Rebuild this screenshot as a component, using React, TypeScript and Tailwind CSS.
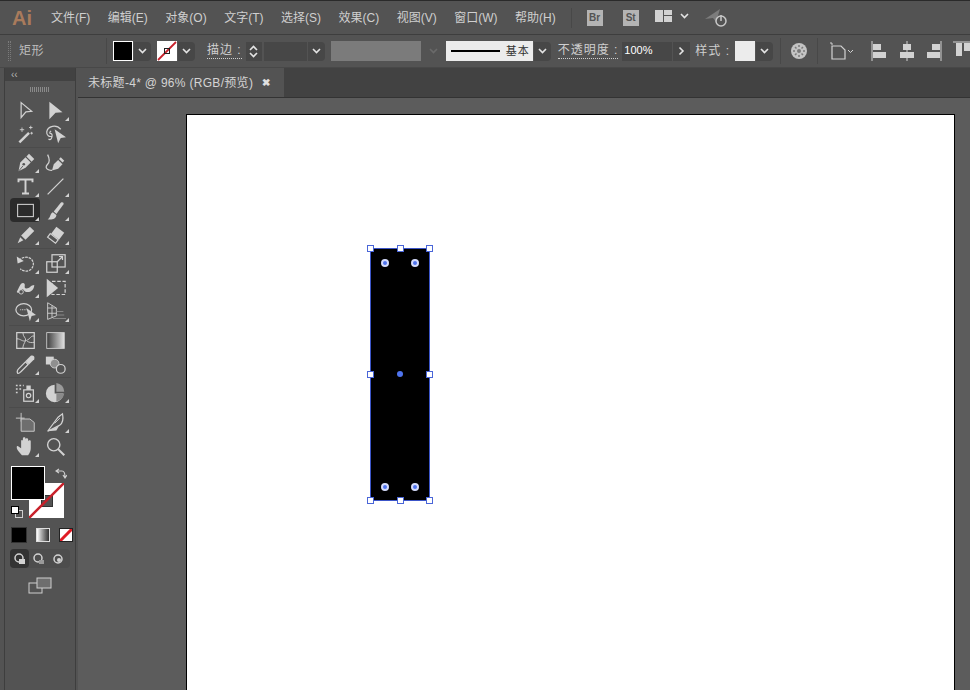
import type { ReactNode } from 'react';

const Chevron = ({ dim = false }: { dim?: boolean }) => (
  <svg width="9" height="6" viewBox="0 0 9 6" fill="none" stroke={dim ? '#6a6a6a' : '#e4e4e4'} strokeWidth="1.6">
    <path d="M1 1l3.5 3.5L8 1" />
  </svg>
);

const DropBtn = ({ w = 'w-[17px]' }: { w?: string }) => (
  <div className={`${w} h-[19px] bg-[#474747] rounded-r-sm flex items-center justify-center`}>
    <Chevron />
  </div>
);

const Sep = () => <div className="w-px h-[26px] bg-[#484848]" />;

const Label = ({ children, ml, dotted = true }: { children: ReactNode; ml: string; dotted?: boolean }) => (
  <span className={`${ml} text-[12px] leading-[15px] tracking-[1px] text-[#cfcfcf] whitespace-nowrap ${dotted ? 'border-b border-dotted border-[#cfcfcf]' : ''}`}>
    {children}
  </span>
);

const stroke = { fill: 'none', stroke: '#d2d2d2', strokeWidth: 1.4 };
const solid = { fill: '#d2d2d2', stroke: 'none' };

const toolIcons: Record<string, ReactNode> = {
  select: <path d="M7 3l12 10-6.500.5L7 20z" {...stroke} />,
  direct: <path d="M5 2l15 12-8 .5L5 22z" {...solid} />,
  wand: <g><path d="M4 20L15 9l2 2L6 22z" {...solid} /><path d="M8 4v5M5.500 6.500h5M18 2v4M16 4h4M19 9v3M17.500 10.500h3" {...stroke} strokeWidth={1} /></g>,
  lasso: <g><path d="M18 6C13 0 3 2 2 9c-.5 4 3 6 6 5M7 8c-2 1-2 3 0 3 2 1 1 4 0 6-1 1-2 1-3 0" {...stroke} /><path d="M11 6l13 9-6 1-3 6z" {...solid} /></g>,
  pen: <g><path d="M4 22l2-10 6-6 6 6-6 6z" {...solid} /><path d="M13 5l3-3 6 6-3 3z" {...solid} /><circle cx="10" cy="14" r="1.500" fill="#535353" /><path d="M4 22l5-6" stroke="#535353" strokeWidth="1" /></g>,
  curvature: <g><path d="M8 21l2-7 5-5 5 5-5 5z" {...solid} /><path d="M16 8l2-2 4 4-2 2z" {...solid} /><path d="M8 21c-7 0-8-4-5-7s2-7 0-11" {...stroke} /></g>,
  type: <path d="M4 7V4h16v3M12 4v16M8 20h8" {...stroke} strokeWidth={2.200} />,
  line: <path d="M3 21L21 3" {...stroke} />,
  rect: <rect x="3" y="5" width="18" height="14" {...stroke} strokeWidth={1.200} />,
  brush: <g><path d="M10 13l8-10c2-1 4 0 3 2l-8 11z" {...solid} /><path d="M3 22c3-1 3-7 6-8l4 3c0 4-5 6-10 5z" {...solid} /></g>,
  pencil: <g><path d="M7 13L17 3l5 5-10 10z" {...solid} /><path d="M6 15l3.500 3.500L3 22z" {...solid} /></g>,
  eraser: <g><path d="M13 3l9 7-6 8-9-7z" {...solid} /><path d="M6 11l9 7-3 4-9-7z" {...stroke} /></g>,
  rotate: <g><path d="M5 9c3-6 15-6 16 3 0 9-10 11-15 6" {...stroke} strokeDasharray="3 1" /><path d="M2 4l1 8 7-3z" {...solid} /></g>,
  scale: <g><rect x="8" y="2" width="15" height="14" {...stroke} /><rect x="2" y="10" width="12" height="12" {...stroke} /><path d="M14 10l6-6M16 4h4v4" {...stroke} /></g>,
  warp: <g><path d="M2 17c3-5 4-11 8-10 3 1-1 6 3 6s5-4 9-4c0 6-5 9-9 8s-3-5-6-2-3 4-5 2z" {...solid} /><circle cx="7" cy="17" r="2.500" fill="#535353" stroke="#d2d2d2" /></g>,
  free: <g><rect x="8" y="5" width="15" height="15" {...stroke} strokeDasharray="4 2" /><path d="M2 2l13 10.500L2 23z" {...solid} /></g>,
  shape: <g><ellipse cx="10" cy="10" rx="9" ry="7" {...stroke} /><path d="M6 10h8" {...stroke} strokeDasharray="1 1" /><path d="M13 8l11 8-5 1-2 6z" {...solid} /></g>,
  perspective: <g><path d="M3 2l10 6v9L3 21zM3 8h10M3 14h10M8 5v14" {...stroke} strokeWidth={1} /><path d="M13 12h8M13 16h9M9 20h15" {...stroke} strokeWidth={1} stroke="#8f8f8f" /></g>,
  mesh: <g><rect x="2" y="3" width="20" height="18" {...stroke} /><path d="M2 10c5 0 6 4 11 2s5-6 9-5M9 3c0 5 4 6 3 9s-3 5-3 9M14 13c2 1 5 2 8 1" {...stroke} strokeWidth={1} /></g>,
  gradient: <g><defs><linearGradient id="toolGrad"><stop offset="0" stopColor="#3c3c3c" /><stop offset="1" stopColor="#e0e0e0" /></linearGradient></defs><rect x="2" y="3" width="20" height="18" fill="url(#toolGrad)" stroke="#d2d2d2" /></g>,
  eyedropper: <g><path d="M3 22c-1-2 0-4 1-5l8-8 3 3-8 8c-1 1-3 3-4 2z" {...stroke} /><path d="M12 8l6-6c3-1 5 1 4 4l-6 6z" {...solid} /></g>,
  blend: <g><rect x="1" y="3" width="9" height="9" {...solid} /><circle cx="11" cy="11" r="5" fill="#8f8f8f" stroke="#d2d2d2" /><circle cx="18" cy="17" r="5" fill="#535353" stroke="#d2d2d2" strokeWidth={1.400} /></g>,
  spray: <g><rect x="10" y="9" width="11" height="13" {...stroke} /><rect x="13" y="4" width="5" height="5" {...solid} /><circle cx="15.500" cy="15.500" r="2.500" {...stroke} /><path d="M1 4h2M5 4h2M9 4h1M1 8h2M5 8h2M1 12h2" {...stroke} strokeWidth={1.800} /></g>,
  graph: <g><path d="M11 3a10 10 0 1 0 10 10H11z" {...solid} /><path d="M13 1a10 10 0 0 1 9 10h-9z" fill="#9a9a9a" /><path d="M13 13h9a10 10 0 0 1-9 9z" fill="#8a8a8a" /></g>,
  artboard: <g><path d="M7 1v10M1 7h10" {...stroke} strokeWidth={1} /><path d="M7 8h10l5 4v10H7z" fill="#6e6e6e" stroke="#d2d2d2" /></g>,
  slice: <g><path d="M3 22L15 6l5-4c1 5 1 10-3 13z" {...stroke} /><path d="M3 22l13-6-3 5z" {...solid} /><path d="M11 13l6-6" {...stroke} strokeWidth={1} /></g>,
  hand: <path d="M8 22c-2-3-6-6-6-9s2-1 5 1V6c0-2 2-2 2 0V3c0-2 3-2 3 0v1c0-2 3-2 3 0v2c0-1 3-2 3 0v8c0 3-1 5-3 8z" {...solid} />,
  zoom: <g><circle cx="10" cy="10" r="7" {...stroke} strokeWidth={1.600} /><path d="M15 15l7 7" {...stroke} strokeWidth={2.400} /></g>,
};

const Tool = ({ icon, corner = true, active = false }: { icon: string; corner?: boolean; active?: boolean }) => (
  <div className={`relative w-[30px] h-6 flex items-center justify-center rounded-sm ${active ? 'bg-[#2b2b2b]' : ''}`}>
    <svg width="21" height="21" viewBox="0 0 24 24">{toolIcons[icon]}</svg>
    {corner && <span className="absolute right-[1px] bottom-[1px] w-0 h-0 border-l-[4px] border-l-transparent border-b-[4px] border-b-[#d2d2d2]" />}
  </div>
);

const ToolRow = ({ a, b, ca = true, cb = true, active = false }: { a: string; b: string; ca?: boolean; cb?: boolean; active?: boolean }) => (
  <div className="flex justify-center">
    <Tool icon={a} corner={ca} active={active} />
    <Tool icon={b} corner={cb} />
  </div>
);

const ToolGroup = ({ children, pad = 'pb-[2px]', last = false }: { children: ReactNode; pad?: string; last?: boolean }) => (
  <div className={`flex flex-col ${pad} mb-[2px] ${last ? '' : 'border-b border-[#4b4b4b]'}`}>{children}</div>
);

const AlignIcon = ({ d, line }: { d: string; line: string }) => (
  <svg width="18" height="20" viewBox="0 0 18 20">
    <path d={d} fill="#d2d2d2" />
    <path d={line} stroke="#d2d2d2" strokeWidth="1" />
  </svg>
);

const Handle = ({ className }: { className: string }) => (
  <span className={`absolute w-[7px] h-[7px] bg-white border border-[#4a66d8] ${className}`} />
);

const Corner = ({ className }: { className: string }) => (
  <span className={`absolute w-2 h-2 rounded-full bg-[#4f74ee] border-2 border-[#d5dcfb] ${className}`} />
);

const menus = ['文件(F)', '编辑(E)', '对象(O)', '文字(T)', '选择(S)', '效果(C)', '视图(V)', '窗口(W)', '帮助(H)'];

export default function App() {
  return (
    <div
      className="w-[970px] h-[690px] overflow-hidden flex flex-col bg-[#535353] text-[#d4d4d4]"
      style={{ fontFamily: '"Liberation Sans", "Noto Sans CJK SC", sans-serif' }}
    >
      {/* menu bar */}
      <div className="h-[34px] shrink-0 border-t border-[#2a2a2a] flex items-center [&>*]:shrink-0">
        <span className="ml-[12px] w-[20px] text-[20px] font-bold text-[#a97b5c] leading-none">Ai</span>
        <div className="ml-[19px] flex gap-[17.5px]">
          {menus.map((m) => (
            <span key={m} className="text-[12px] text-[#cfcfcf] whitespace-nowrap">{m}</span>
          ))}
        </div>
        <div className="ml-[15px] w-px h-5 bg-[#484848]" />
        <div className="ml-[15px] w-4 h-4 bg-[#b4b4b4] text-[#535353] text-[10px] font-bold flex items-center justify-center">Br</div>
        <div className="ml-[20px] w-4 h-4 bg-[#b4b4b4] text-[#535353] text-[10px] font-bold flex items-center justify-center">St</div>
        <svg className="ml-[16px] mb-[3px]" width="18" height="12" viewBox="0 0 18 12">
          <path d="M0 0h8v12H0zM9 0h8v5H9zM9 6h8v6H9z" fill="#d2d2d2" />
        </svg>
        <div className="ml-[7px] mb-[3px]"><Chevron /></div>
        <svg className="ml-[16px]" width="24" height="20" viewBox="0 0 24 20">
          <path d="M0 11L15 1l-4 13-3-4z" fill="#7c7c7c" />
          <circle cx="16" cy="13" r="5" fill="none" stroke="#c8c8c8" strokeWidth="1.500" />
          <path d="M16 7v6" stroke="#c8c8c8" strokeWidth="1.500" />
        </svg>
      </div>

      {/* control bar */}
      <div className="h-[34px] shrink-0 border-t border-[#3e3e3e] border-b border-b-[#484848] flex items-center bg-[#535353] [&>*]:shrink-0">
        <div className="ml-[8px] w-[3px] h-[20px] border-x border-dotted border-[#7a7a7a]" />
        <span className="ml-[8px] w-[25px] text-[12px] tracking-[0.5px] text-[#bdbdbd] whitespace-nowrap">矩形</span>
        <div className="ml-[62px]"><Sep /></div>
        <div className="ml-[6px] w-[20px] h-[20px] bg-black border border-white" />
        <div className="ml-px"><DropBtn /></div>
        <div className="ml-[6px] relative w-[20px] h-[20px] bg-white">
          <svg className="absolute inset-0" width="20" height="20" viewBox="0 0 20 20">
            <path d="M1 19L19 1" stroke="#c8202a" strokeWidth="1.800" />
            <rect x="7.500" y="7.500" width="5" height="5" fill="none" stroke="#222" strokeWidth="1" />
          </svg>
        </div>
        <div className="ml-px"><DropBtn /></div>
        <Label ml="ml-[12px]">描边 :</Label>
        <div className="ml-[4px] w-4 h-[19px] bg-[#474747] flex flex-col items-center justify-center gap-[1px]">
          <div className="rotate-180"><Chevron /></div>
          <Chevron />
        </div>
        <div className="ml-[2px] w-[43px] h-[19px] bg-[#474747]" />
        <div className="ml-px"><DropBtn /></div>
        <div className="ml-[6px] w-[90px] h-[20px] bg-[#7b7b7b]" />
        <div className="ml-[5px] w-[16px] flex justify-center"><Chevron dim /></div>
        <div className="ml-[4px] w-[87px] h-[20px] bg-[#ececec] flex items-center">
          <div className="ml-[5px] w-[49px] h-[2px] bg-black" />
          <span className="ml-[6px] text-[11px] text-[#333] tracking-[1px] whitespace-nowrap">基本</span>
        </div>
        <div className="ml-px"><DropBtn /></div>
        <Label ml="ml-[7px]">不透明度 :</Label>
        <div className="ml-[4px] w-[50px] h-[19px] bg-[#474747] text-[11px] text-white leading-[17px] pl-[2px]">100%</div>
        <div className="ml-px w-[17px] h-[19px] bg-[#474747] flex items-center justify-center">
          <div className="-rotate-90"><Chevron /></div>
        </div>
        <Label ml="ml-[5px]" dotted={false}>样式 :</Label>
        <div className="ml-[5px] w-[20px] h-[20px] bg-[#ececec]" />
        <div className="ml-px"><DropBtn /></div>
        <div className="ml-[7px]"><Sep /></div>
        <svg className="ml-[9px]" width="18" height="18" viewBox="0 0 18 18">
          <circle cx="9" cy="9" r="8" fill="#c4c4c4" />
          <circle cx="9" cy="9" r="2" fill="#7a7a7a" />
          <path d="M9 3v2M9 13v2M3 9h2M13 9h2M5 5l1.500 1.500M13 5l-1.500 1.500M5 13l1.500-1.500M13 13l-1.500-1.500" stroke="#7a7a7a" strokeWidth="1.500" />
        </svg>
        <div className="ml-[9px]"><Sep /></div>
        <svg className="ml-[11px]" width="26" height="18" viewBox="0 0 26 18">
          <path d="M3 4h9l4 4v9H3z" fill="none" stroke="#d2d2d2" strokeWidth="1.200" />
          <path d="M1 1h2M3 1v2" stroke="#d2d2d2" />
          <path d="M19 8l2.500 2.500L24 8" fill="none" stroke="#d2d2d2" />
        </svg>
        <div className="ml-[16px]"><AlignIcon d="M2 3h8v6H2zM2 11h13v6H2z" line="M1 0v20" /></div>
        <div className="ml-[9px]"><AlignIcon d="M5 3h8v6H5zM2 11h14v6H2z" line="M9 0v20" /></div>
        <div className="ml-[8px]"><AlignIcon d="M8 3h8v6H8zM3 11h13v6H3z" line="M17 0v20" /></div>
        <div className="ml-[11px]"><AlignIcon d="M3 2h6v13H3zM11 2h7v8h-7z" line="M0 1h18" /></div>
      </div>

      <div className="flex-1 flex min-h-0">
        {/* tools */}
        <div className="w-[78px] shrink-0 flex bg-[#535353]">
          <div className="ml-[4px] w-[72px] border-x border-[#3e3e3e] flex flex-col">
            <div className="h-[13px] bg-[#424242] flex items-center pl-[6px] text-[10px] text-[#b5b5b5] leading-none">‹‹</div>
            <div className="h-[17px] flex items-center justify-center">
              <div className="w-5 h-[5px] bg-[repeating-linear-gradient(90deg,#8a8a8a_0_1px,transparent_1px_2px)]" />
            </div>
            <div className="flex flex-col px-[4px]">
              <ToolGroup pad="pb-[1px]">
                <ToolRow a="select" b="direct" ca={false} />
                <ToolRow a="wand" b="lasso" ca={false} cb={false} />
              </ToolGroup>
              <ToolGroup>
                <ToolRow a="pen" b="curvature" cb={false} />
                <ToolRow a="type" b="line" />
                <ToolRow a="rect" b="brush" active />
                <ToolRow a="pencil" b="eraser" />
              </ToolGroup>
              <ToolGroup>
                <ToolRow a="rotate" b="scale" />
                <ToolRow a="warp" b="free" cb={false} />
                <ToolRow a="shape" b="perspective" />
              </ToolGroup>
              <ToolGroup pad="pb-[1px]">
                <ToolRow a="mesh" b="gradient" ca={false} cb={false} />
                <ToolRow a="eyedropper" b="blend" cb={false} />
              </ToolGroup>
              <ToolGroup pad="pb-[3px]">
                <ToolRow a="spray" b="graph" />
              </ToolGroup>
              <ToolGroup last>
                <ToolRow a="artboard" b="slice" ca={false} />
                <ToolRow a="hand" b="zoom" cb={false} />
              </ToolGroup>
            </div>

            {/* fill and stroke */}
            <div className="relative h-[57px] mt-[4px]">
              <div className="absolute left-[24px] top-[17px] w-[35px] h-[35px] bg-white overflow-hidden">
                <div className="absolute left-[12px] top-[12px] w-[12px] h-[12px] bg-[#535353] border border-[#333]" />
                <svg className="absolute inset-0" width="35" height="35" viewBox="0 0 35 35">
                  <path d="M0 35L35 0" stroke="#c8202a" strokeWidth="2.500" />
                </svg>
              </div>
              <div className="absolute left-[6px] top-0 w-[34px] h-[34px] bg-black border border-white" />
              <svg className="absolute left-[50px] top-[2px]" width="12" height="12" viewBox="0 0 12 12">
                <path d="M1 3h6c2 0 3 2 3 6M4 1L1 3l3 2M8 7l2 3 2-3" fill="none" stroke="#cfcfcf" strokeWidth="1.200" />
              </svg>
              <div className="absolute left-[10px] top-[44px] w-2 h-2 border border-[#cfcfcf]" />
              <div className="absolute left-[6px] top-[40px] w-2 h-2 bg-white border border-black" />
            </div>

            <div className="flex gap-[7px] pl-[6px] mt-[4px] items-center">
              <div className="w-[16px] h-[16px] bg-black border border-[#333]" />
              <div className="w-[14px] h-[14px] ml-[2px] border border-[#ddd] bg-gradient-to-r from-white to-[#333]" />
              <div className="relative w-[14px] h-[14px] ml-[2px] bg-white border border-[#222] overflow-hidden">
                <svg className="absolute inset-0" width="12" height="12" viewBox="0 0 12 12">
                  <path d="M0 12L12 0" stroke="#e01b24" strokeWidth="3" />
                </svg>
              </div>
            </div>

            <div className="flex mt-[6px] mx-[5px] h-[19px] bg-[#4d4d4d] rounded-sm">
              <div className="w-[19px] bg-[#333] rounded-sm flex items-center justify-center">
                <svg width="12" height="12" viewBox="0 0 12 12"><circle cx="5" cy="5" r="4" fill="none" stroke="#d2d2d2" strokeWidth="1.500" /><rect x="5" y="6" width="6" height="5" fill="#d2d2d2" /></svg>
              </div>
              <div className="w-[19px] flex items-center justify-center">
                <svg width="12" height="12" viewBox="0 0 12 12"><circle cx="5" cy="5" r="4" fill="none" stroke="#d2d2d2" strokeWidth="1.500" /><rect x="6" y="7" width="5" height="4" fill="#9a9a9a" /></svg>
              </div>
              <div className="w-[19px] flex items-center justify-center">
                <svg width="12" height="12" viewBox="0 0 12 12"><circle cx="6" cy="6" r="4" fill="none" stroke="#d2d2d2" strokeWidth="1.500" /><circle cx="7" cy="7" r="2" fill="#d2d2d2" /></svg>
              </div>
            </div>

            <div className="flex justify-center mt-[9px]">
              <svg width="24" height="17" viewBox="0 0 24 17">
                <rect x="1" y="6" width="13" height="10" fill="none" stroke="#cfcfcf" />
                <rect x="9" y="1" width="14" height="10" fill="#6e6e6e" stroke="#cfcfcf" />
              </svg>
            </div>
          </div>
        </div>

        {/* document area */}
        <div className="flex-1 flex flex-col min-w-0">
          <div className="h-[30px] shrink-0 bg-[#424242] flex border-b border-[#333]">
            <div className="w-[206px] bg-[#535353] flex items-center pl-[10px]">
              <span className="text-[12px] text-[#d4d4d4] whitespace-nowrap tracking-[0.3px]">未标题-4* @ 96% (RGB/预览)</span>
              <span className="ml-[9px] text-[10px] font-bold text-[#e0e0e0]">✖</span>
            </div>
          </div>
          <div className="flex-1 bg-[#5c5c5c] pl-[108px] pt-[16px] pr-[15px] overflow-hidden">
            <div className="relative w-full h-[640px] bg-white border border-black">
              {/* selected rectangle */}
              <div className="absolute left-[183px] top-[133px] w-[60px] h-[253px] bg-black border border-[#3c55c8]">
                <Handle className="-left-[4px] -top-[4px]" />
                <Handle className="left-[26px] -top-[4px]" />
                <Handle className="-right-[4px] -top-[4px]" />
                <Handle className="-left-[4px] top-[122px]" />
                <Handle className="-right-[4px] top-[122px]" />
                <Handle className="-left-[4px] -bottom-[4px]" />
                <Handle className="left-[26px] -bottom-[4px]" />
                <Handle className="-right-[4px] -bottom-[4px]" />
                <Corner className="left-[10px] top-[10px]" />
                <Corner className="right-[10px] top-[10px]" />
                <Corner className="left-[10px] bottom-[9px]" />
                <Corner className="right-[10px] bottom-[9px]" />
                <span className="absolute left-[26px] top-[122px] w-[6px] h-[6px] rounded-full bg-[#4f74ee]" />
              </div>
            </div>
          </div>
        </div>
      </div>
    </div>
  );
}
